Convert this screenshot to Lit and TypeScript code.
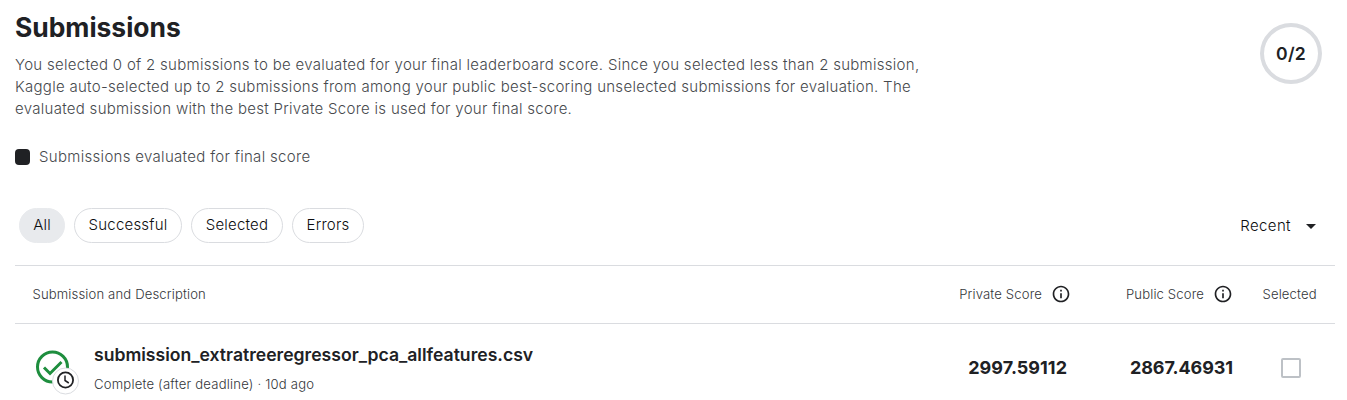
import { LitElement, html, css } from "lit";
import { customElement } from "lit/decorators.js";

const infoIcon = html`<svg class="info" viewBox="0 0 24 24" fill="currentColor">
  <path d="M11 7h2v2h-2zm0 4h2v6h-2zm1-9C6.48 2 2 6.48 2 12s4.48 10 10 10 10-4.48 10-10S17.52 2 12 2zm0 18c-4.41 0-8-3.59-8-8s3.59-8 8-8 8 3.59 8 8-3.59 8-8 8z"/>
</svg>`;

@customElement("app-root")
export class AppRoot extends LitElement {
  static styles = css`
    :host { display: block; height: 400px; overflow: hidden; background: #fff; color: #202124;
      font-family: Inter, "Liberation Sans", sans-serif; font-size: 15px; font-weight: 300; letter-spacing: 0.2px; padding: 0 12px 0 15px; box-sizing: border-box; }
    * { box-sizing: border-box; }
    .top { display: flex; justify-content: space-between; height: 148px; }
    h1 { margin: 11px 0 0; font-size: 26.4px; line-height: 33px; font-weight: 700; letter-spacing: 0; }
    .lead { margin: 10px 0 0; line-height: 22px; color: #46494d; letter-spacing: 0.288px; white-space: nowrap; }
    .ring { width: 62px; height: 61px; margin: 23px 13px 0 0; border: 4px solid #dadce0; border-radius: 50%;
      display: flex; align-items: center; justify-content: center; font-size: 17.6px; font-weight: 600; }
    .legend { display: flex; align-items: center; gap: 9px; height: 17px; color: #46494d; letter-spacing: 0.31px; }
    .legend span + span { margin-top: -1px; }
    .swatch { width: 15px; height: 16px; border-radius: 4px; background: #202124; margin-top: 1px; }
    .bar { display: flex; justify-content: space-between; margin-top: 43px; padding-left: 4px; height: 57px; }
    .chips { display: flex; gap: 9px; height: 35px; color: #0c0d0f; }
    .chip { display: flex; align-items: center; justify-content: center; border: 1px solid #dadce0; border-radius: 18px; padding-bottom: 2px; }
    .on { background: #e8eaed; border-color: #e8eaed; }
    .c0 { width: 46px; } .c1 { width: 108px; } .c2 { width: 92px; } .c3 { width: 72px; }
    .sort { display: flex; align-items: center; height: 35px; gap: 15px; padding-right: 19px; }
    .sort span { letter-spacing: 0.4px; color: #0c0d0f; }
    .arrow { width: 10px; height: 5px; display: block; margin-top: 1px; }
    .row { display: grid; grid-template-columns: 1fr 163px 163px 92px; align-items: center; border-top: 1px solid #dadce0; }
    .head { height: 58px; font-size: 13.1px; color: #33363a; letter-spacing: 0.14px; padding-bottom: 1px; }
    .first { padding-left: 17.5px; }
    .score { display: flex; align-items: center; justify-content: flex-end; gap: 9px; }
    .head .score { padding-right: 9px; }
    .head .score + .score { padding-right: 10px; }
    .info { width: 20px; height: 20px; color: #202124; }
    .sel { padding-left: 19.5px; }
    .item { height: 88px; }
    .entry { display: flex; padding-left: 20px; }
    .status { width: 46px; height: 46px; margin: 7px 13px -3px 0; display: block; }
    .name { font-size: 17.6px; line-height: 22px; font-weight: 600; margin-top: 1px; letter-spacing: 0; }
    .meta { font-size: 13.1px; line-height: 18px; margin-top: 9px; color: #33363a; letter-spacing: 0.2px; }
    .val { text-align: right; font-size: 18px; font-weight: 700; letter-spacing: 0.02px; padding-right: 13px; }
    .val + .val { padding-right: 10px; letter-spacing: -0.08px; }
    .box { width: 20px; height: 20px; border: 2px solid #bdc1c6; border-radius: 2px; margin-left: 38px; }
  `;

  render() {
    return html`
      <div class="top">
        <div>
          <h1><span>Submissions</span></h1>
          <p class="lead">
            <span>You selected 0 of 2 submissions to be evaluated for your final leaderboard score. Since you selected less than 2 submission,</span><br>
            <span>Kaggle auto-selected up to 2 submissions from among your public best-scoring unselected submissions for evaluation. The</span><br>
            <span>evaluated submission with the best Private Score is used for your final score.</span>
          </p>
        </div>
        <div class="ring">0/2</div>
      </div>
      <div class="legend"><span class="swatch"></span><span>Submissions evaluated for final score</span></div>
      <div class="bar">
        <div class="chips">
          <div class="chip c0 on">All</div>
          <div class="chip c1">Successful</div>
          <div class="chip c2">Selected</div>
          <div class="chip c3">Errors</div>
        </div>
        <div class="sort">
          <span>Recent</span>
          <svg class="arrow" viewBox="0 0 10 5"><path d="M0 0h10L5 5z" fill="#202124"/></svg>
        </div>
      </div>
      <div class="row head">
        <div class="first">Submission and Description</div>
        <div class="score"><span>Private Score</span>${infoIcon}</div>
        <div class="score"><span>Public Score</span>${infoIcon}</div>
        <div class="sel">Selected</div>
      </div>
      <div class="row item">
        <div class="entry">
          <svg class="status" viewBox="0 0 46 46" fill="none">
            <circle cx="17.5" cy="17" r="15" stroke="#1e8e3e" stroke-width="3"/>
            <path d="M9 17.5l6 6L26.5 12" stroke="#1e8e3e" stroke-width="3"/>
            <circle cx="30.5" cy="31" r="13" fill="#fff" stroke="#dadce0"/>
            <circle cx="30.5" cy="30" r="7.6" stroke="#202124" stroke-width="1.8"/>
            <path d="M30 25.5v5l3.8 2.5" stroke="#202124" stroke-width="1.5"/>
          </svg>
          <div>
            <div class="name">submission_extratreeregressor_pca_allfeatures.csv</div>
            <div class="meta">Complete (after deadline) · 10d ago</div>
          </div>
        </div>
        <div class="val">2997.59112</div>
        <div class="val">2867.46931</div>
        <div><div class="box"></div></div>
      </div>
    `;
  }
}
